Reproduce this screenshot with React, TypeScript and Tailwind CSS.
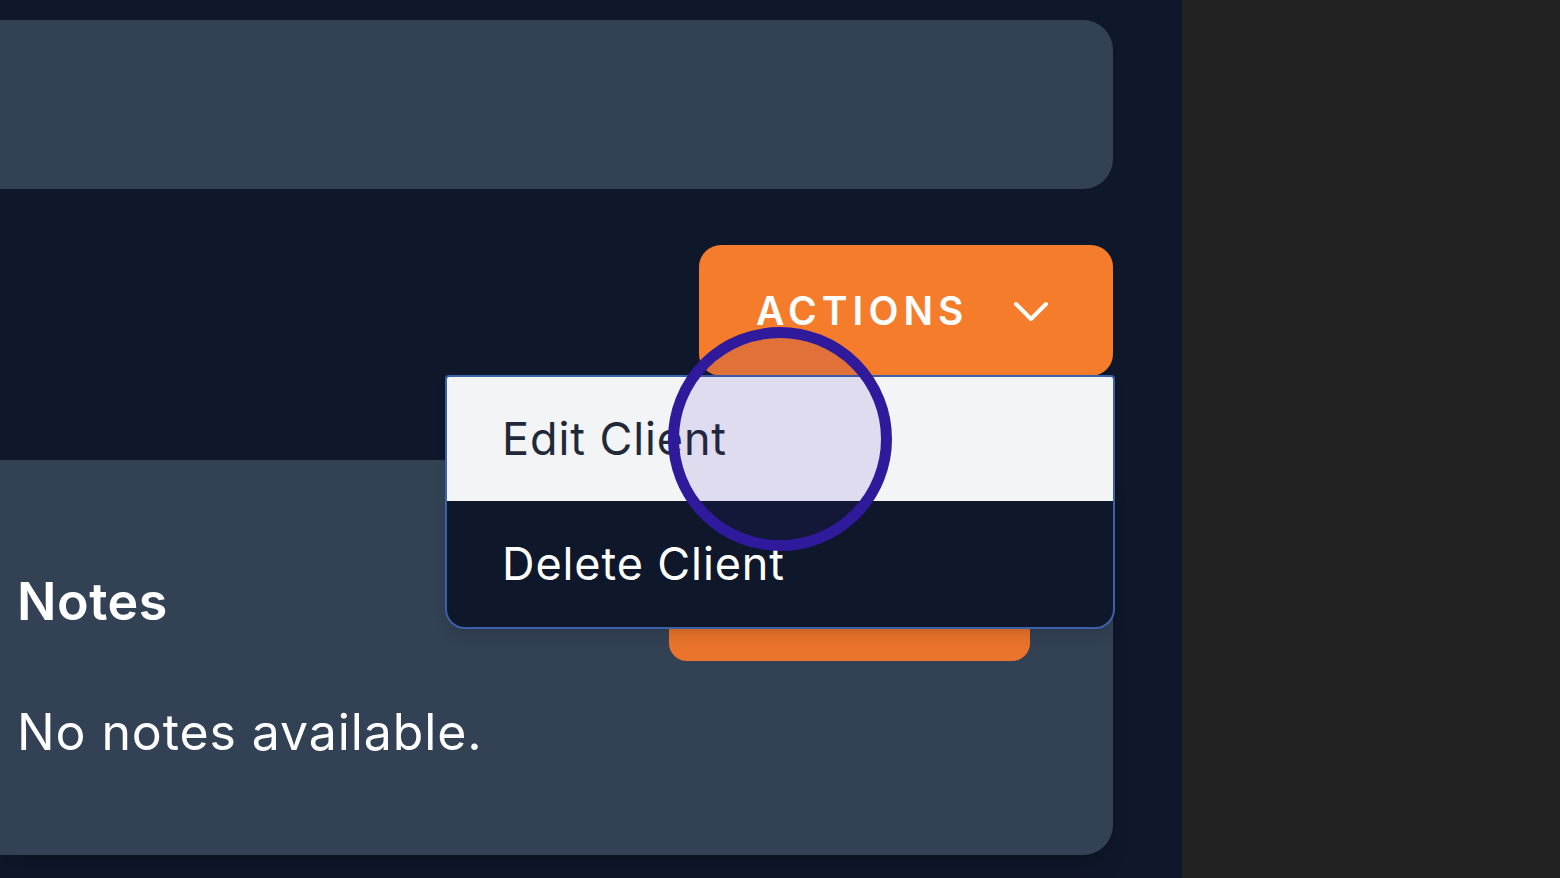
import React from 'react';

const font = { fontFamily: 'Inter, Lato, "Open Sans", sans-serif' };

const Chevron = () => (
  <svg width="36" height="22" viewBox="0 0 36 22" fill="none" stroke="white" strokeWidth="4" strokeLinecap="round" strokeLinejoin="round">
    <polyline points="3,3 18,18 33,3" />
  </svg>
);

export default function App() {
  return (
    <div className="relative flex h-[878px] w-[1560px] overflow-hidden" style={font}>
      <main className="w-[1182px] bg-[#0f172a] pt-[20px] pr-[69px]">
        <div className="h-[169px] rounded-r-[30px] bg-[#334155]" />

        <div className="relative z-20 mt-[56px] flex justify-end">
          <button className="flex h-[131px] w-[414px] items-center gap-[44px] rounded-[22px] bg-[#f47c2b] pl-[57px] pt-[2px] text-[39px] font-semibold tracking-[0.13em] text-white">
            ACTIONS
            <Chevron />
          </button>
          <div className="absolute top-[130px] right-[-2px] w-[670px] overflow-hidden rounded-b-[20px] rounded-t-[4px] border-2 border-[#3d61a8] bg-[#0f172a] shadow-lg">
            <div className="flex h-[124px] items-center bg-[#f3f4f6] pl-[55px] text-[45px] tracking-[0.02em] text-[#1f2937]">Edit Client</div>
            <div className="flex h-[126px] items-center pl-[55px] text-[45px] tracking-[0.02em] text-white">Delete Client</div>
          </div>
        </div>

        <section className="mt-[84px] h-[395px] rounded-r-[30px] bg-[#334155] pl-[17px] shadow-xl">
          <div className="flex items-start justify-between pr-[83px]">
            <h2 className="pt-[103px] text-[52px] font-semibold tracking-[0.01em] text-white">Notes</h2>
            <button className="mt-[111px] h-[90px] w-[361px] rounded-[18px] bg-[#ea742b]" />
          </div>
          <p className="mt-[34px] text-[50px] tracking-[0.018em] text-white">No notes available.</p>
        </section>
      </main>
      <aside className="flex-1 bg-[#222222]" />

      <div className="pointer-events-none absolute left-[668px] top-[327px] z-30 h-[224px] w-[224px] rounded-full border-[11px] border-[#2f1a9c] bg-[rgba(52,25,170,0.11)]" />
    </div>
  );
}
